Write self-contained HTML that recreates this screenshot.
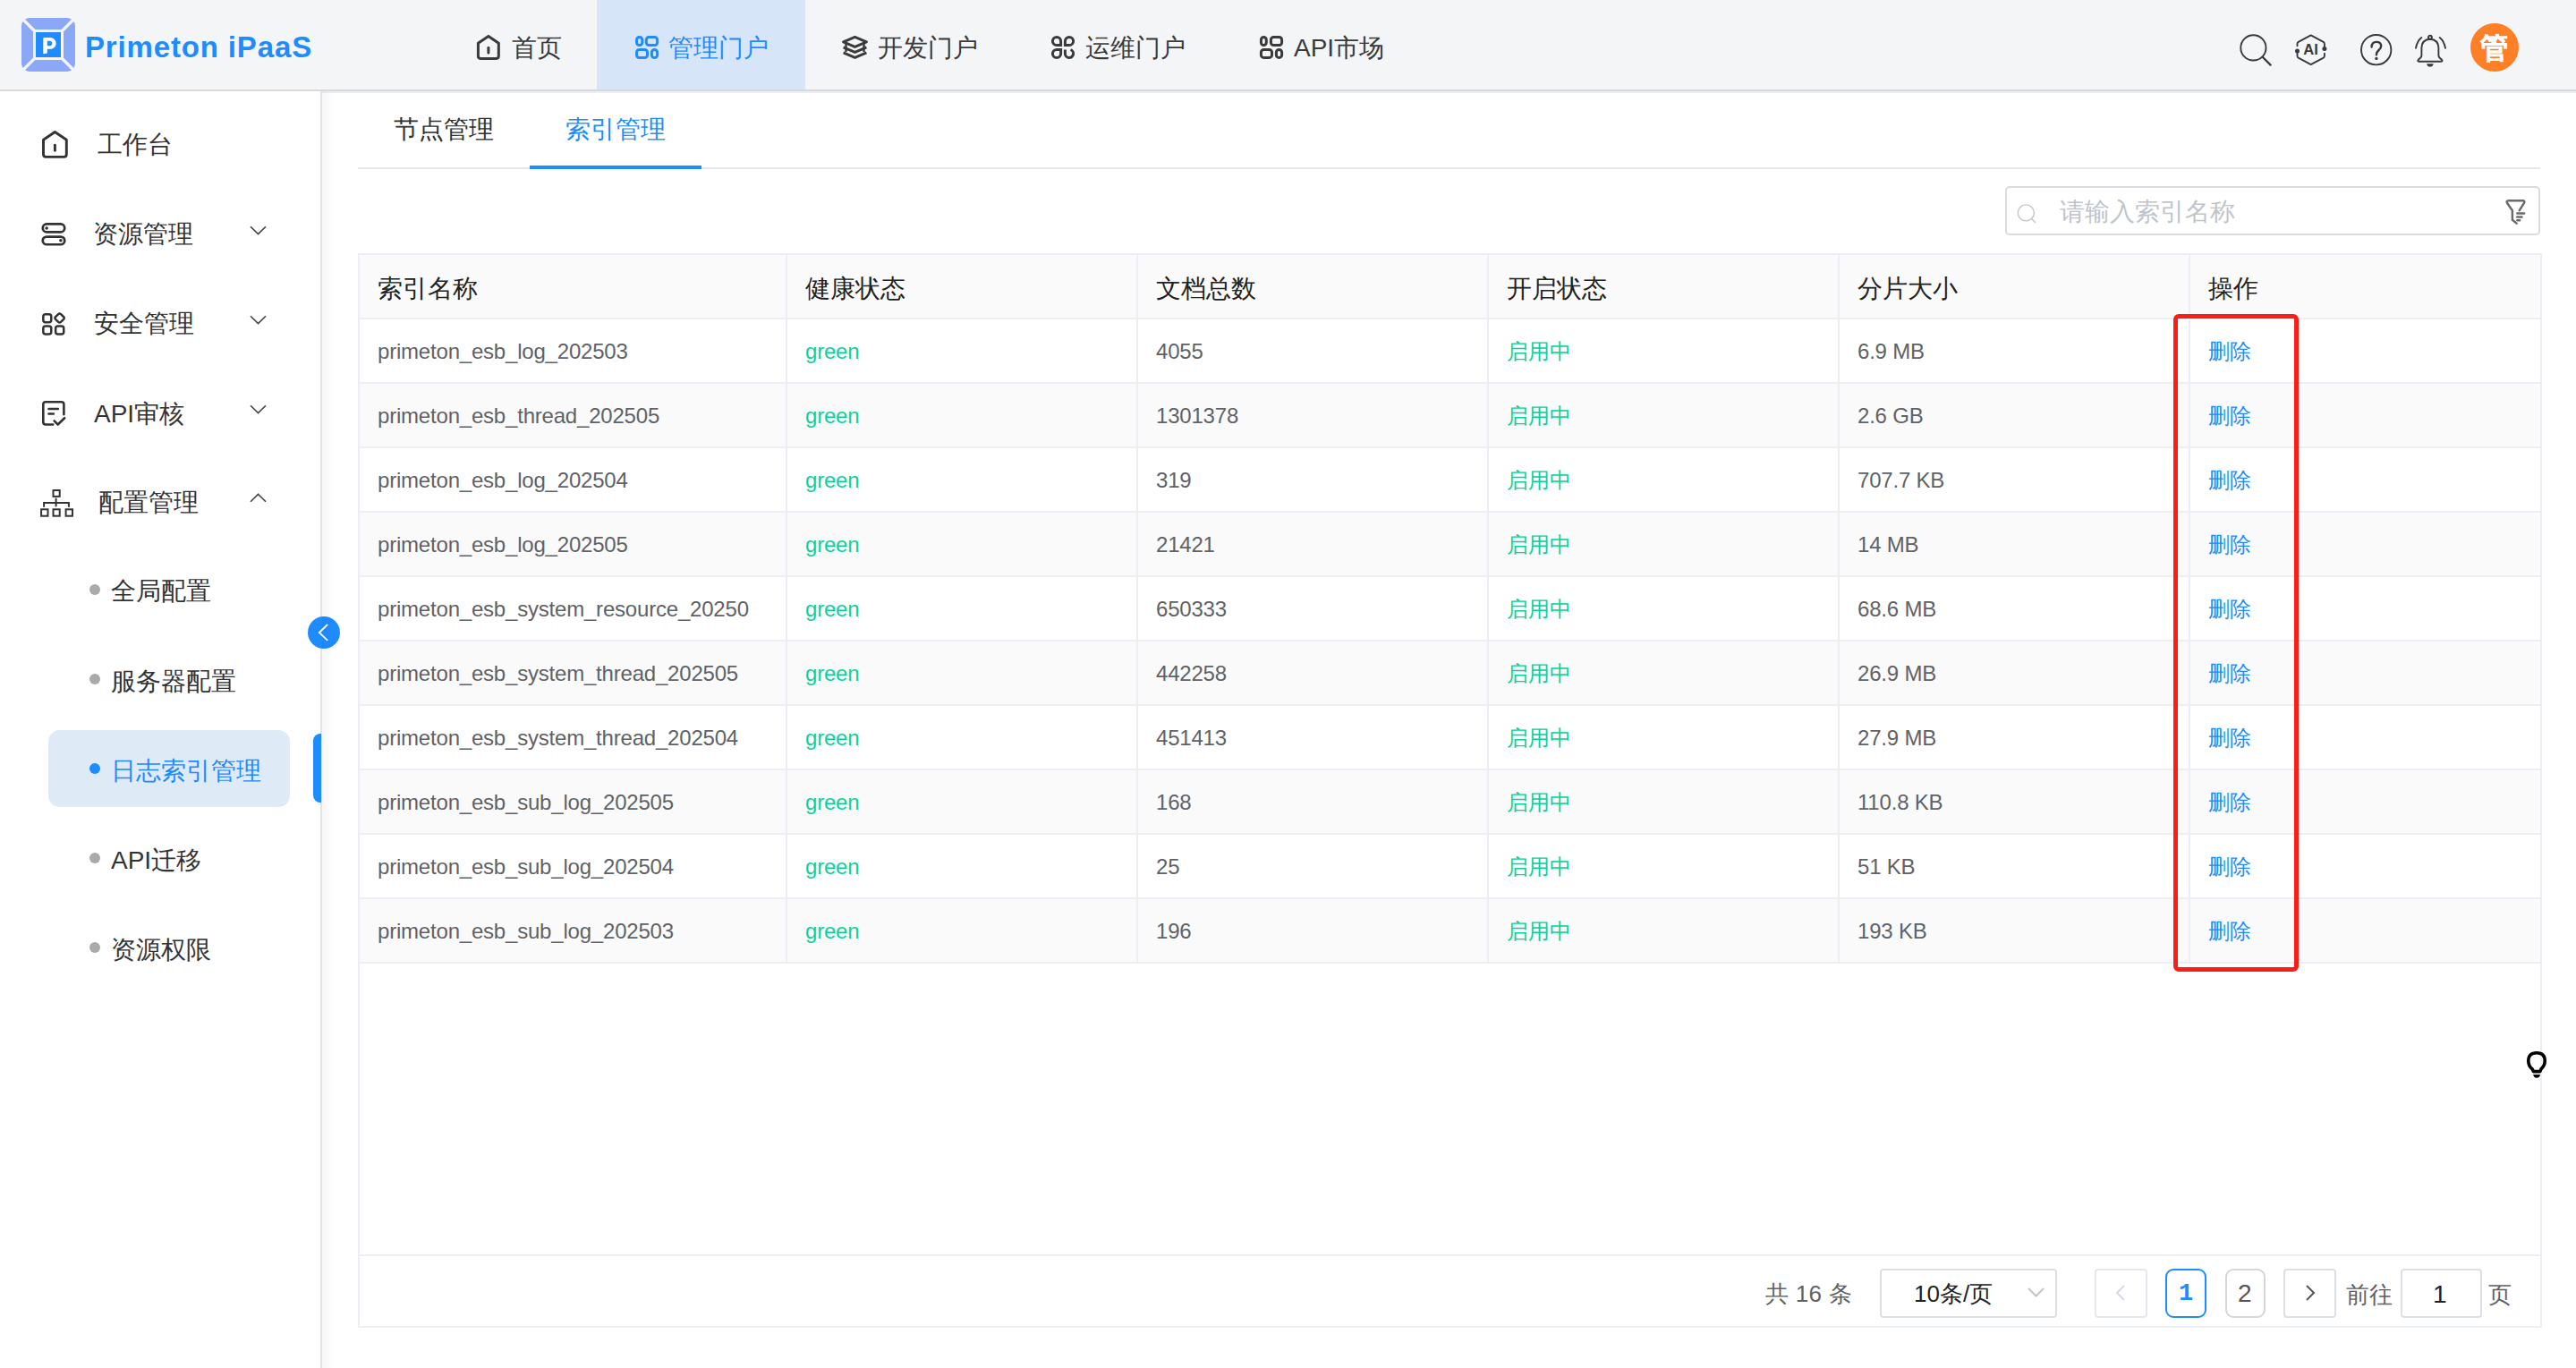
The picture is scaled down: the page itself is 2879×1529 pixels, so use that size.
<!DOCTYPE html>
<html><head><meta charset="utf-8">
<style>
*{box-sizing:border-box;margin:0;padding:0}
html,body{width:2879px;height:1529px;overflow:hidden;background:#fff;font-family:"Liberation Sans",sans-serif;color:#333;line-height:1}
.a{position:absolute;white-space:nowrap}
svg.a{display:block;overflow:visible}
#hdr{position:absolute;left:0;top:0;width:2879px;height:102px;background:#f4f5f7;border-bottom:2px solid #d9d9d9}
.logo-t{left:95px;top:36px;font-size:33px;font-weight:bold;color:#1e8cff;letter-spacing:0.85px}
.nt{top:40px;font-size:28px;color:#3a3a3a}
#side{position:absolute;left:0;top:102px;width:360px;height:1427px;background:#fff;border-right:2px solid #e4e4e4}
.st{font-size:28px;color:#333}
.dot{position:absolute;width:12px;height:12px;border-radius:50%;background:#aaa}
.tab{top:131px;font-size:28px;color:#303133}
#tbl{position:absolute;left:400px;top:283px;width:2439px;border-collapse:collapse;table-layout:fixed}
#tbl td,#tbl th{height:72px;border:2px solid #ebeef5;padding:0 0 0 20px;text-align:left;white-space:nowrap;overflow:hidden;font-weight:normal;vertical-align:middle}
#tbl th{font-size:28px;color:#222;background:#fafafa;padding-top:5px}
#tbl td{font-size:24px;color:#606266;letter-spacing:-0.2px;padding-top:2px}
#tbl tr.s td{background:#fafafa}
#tbl td.g{color:#08d39a}
#tbl td.lnk{color:#1e8cff}
.pg{position:absolute;top:1418px;height:55px;border:2px solid #dcdfe6;border-radius:4px;background:#fff}

</style></head><body>
<div id="hdr">
  <svg class="a" style="left:24px;top:20px" width="60" height="60" viewBox="0 0 60 60">
    <rect x="0" y="0" width="60" height="60" rx="9" fill="#8ba7f7"/>
    <g stroke="#f3f4f6" stroke-width="3.2">
      <line x1="-2" y1="-2" x2="15" y2="15"/><line x1="62" y1="-2" x2="45" y2="15"/>
      <line x1="-2" y1="62" x2="15" y2="45"/><line x1="62" y1="62" x2="45" y2="45"/>
    </g>
    <rect x="14.5" y="14.5" width="31" height="31" fill="#1e8cff" stroke="#f3f4f6" stroke-width="3"/>
    <path d="M24.3 23Q24.3 22.1 25.3 22.1H30.8C36 22.1 38.6 24.6 38.6 28.45C38.6 32.3 36 34.8 30.8 34.8H28.8V39.5L24.3 40.2Z M28.8 25.8V31.2H31.3Q34.3 31.2 34.3 28.5Q34.3 25.8 31.3 25.8Z" fill="#fff" fill-rule="evenodd"/>
  </svg>
  <div class="a logo-t">Primeton iPaaS</div>

  <!-- nav -->
  <svg class="a" style="left:533px;top:39px" width="26" height="28" viewBox="0 0 26 28" fill="none" stroke="#3a3a3a" stroke-width="3" stroke-linejoin="round" stroke-linecap="round">
    <path d="M1.4 9.2 L12.9 1.4 L24.3 9.2 V23.8 Q24.3 26.4 21.7 26.4 H4 Q1.4 26.4 1.4 23.8 Z"/><path d="M12.9 14.2v5.8"/>
  </svg>
  <div class="a nt" style="left:572px">首页</div>

  <div class="a" style="left:667px;top:0;width:233px;height:100px;background:#d6e6f8"></div>
  <svg class="a" style="left:710px;top:40px" width="26" height="26" viewBox="0 0 26 26" fill="none" stroke="#1e8cff" stroke-width="3">
    <rect x="1.5" y="1.5" width="6.3" height="9" rx="3"/><rect x="12.3" y="1.5" width="12.3" height="9" rx="3"/>
    <rect x="1.5" y="15.5" width="12" height="9" rx="3"/><rect x="18.4" y="15.5" width="6.2" height="9" rx="3"/>
  </svg>
  <div class="a nt" style="left:747px;color:#1e8cff">管理门户</div>

  <svg class="a" style="left:941px;top:40px" width="29" height="26" viewBox="0 0 29 26" fill="none" stroke="#3a3a3a" stroke-width="3" stroke-linejoin="round">
    <path d="M1.6 6.8 L14.5 1.4 L27.4 6.8 L14.5 12.4 Z"/><path d="M1.6 12.9 L14.5 18.4 L27.4 12.9"/><path d="M1.6 18.9 L14.5 24.4 L27.4 18.9"/><path d="M4.5 8 V18 M24.5 8 V18" stroke-width="2.4"/>
  </svg>
  <div class="a nt" style="left:981px">开发门户</div>

  <svg class="a" style="left:1175px;top:40px" width="26" height="26" viewBox="0 0 26 26" fill="none" stroke="#3a3a3a" stroke-width="3">
    <path d="M6 10.6 A4.6 4.6 0 1 1 10.6 6 V10.6 Z"/><path d="M15.4 6 A4.6 4.6 0 1 1 20 10.6 H15.4 Z"/><path d="M10.6 20 A4.6 4.6 0 1 1 6 15.4 H10.6 Z"/><path d="M15.4 15.4 V20 A4.6 4.6 0 1 0 21.5 15.6"/>
  </svg>
  <div class="a nt" style="left:1213px">运维门户</div>

  <svg class="a" style="left:1408px;top:40px" width="27" height="26" viewBox="0 0 27 26" fill="none" stroke="#3a3a3a" stroke-width="3">
    <rect x="1.4" y="1.4" width="5.9" height="9.2" rx="3"/><rect x="12.4" y="1.4" width="12.2" height="9.2" rx="3"/>
    <rect x="1.4" y="15.4" width="12.1" height="9" rx="3"/><rect x="18.4" y="15.4" width="6.2" height="9" rx="3"/>
  </svg>
  <div class="a nt" style="left:1446px">API市场</div>

  <!-- right icons -->
  <svg class="a" style="left:2503px;top:38px" width="36" height="36" viewBox="0 0 36 36" fill="none" stroke="#3a3a3a" stroke-width="1.9">
    <circle cx="15.4" cy="15.4" r="14.1"/><path d="M26 26 L34.6 34.6" stroke-width="2.3" stroke-linecap="round"/>
  </svg>
  <svg class="a" style="left:2565px;top:38px" width="36" height="36" viewBox="0 0 36 36" fill="none" stroke="#3a3a3a" stroke-width="1.9" stroke-linecap="round" stroke-linejoin="round">
    <path d="M2.5 13.2 V11 Q2.5 9.6 3.7 8.9 L17.7 1.4 L31.7 8.9 Q32.9 9.6 32.9 11 V16.3"/>
    <path d="M32.9 21.8 V24.6 Q32.9 26 31.7 26.7 L17.7 34.1 L3.7 26.7 Q2.5 26 2.5 24.6 V19"/>
    <circle cx="32.9" cy="16.5" r="2.5" fill="#3a3a3a" stroke="none"/><circle cx="2.5" cy="19" r="2.5" fill="#3a3a3a" stroke="none"/>
    <text x="17.6" y="23.2" font-size="16.5" font-weight="bold" font-family="Liberation Sans" fill="#3a3a3a" stroke="none" text-anchor="middle">AI</text>
  </svg>
  <svg class="a" style="left:2638px;top:38px" width="36" height="36" viewBox="0 0 36 36" fill="none" stroke="#3a3a3a" stroke-width="1.9" stroke-linecap="round">
    <circle cx="17.7" cy="17.7" r="16.7"/><path d="M12.6 14.6 Q12.6 8.9 17.9 8.9 Q23.2 8.9 23.2 13.5 Q23.2 15.8 20.6 18 Q17.9 20.2 17.9 23.3" stroke-width="2.4"/>
    <circle cx="17.9" cy="27.4" r="1.7" fill="#3a3a3a" stroke="none"/>
  </svg>
  <svg class="a" style="left:2699px;top:39px" width="35" height="37" viewBox="0 0 35 37" fill="none" stroke="#3a3a3a" stroke-width="1.9" stroke-linecap="round" stroke-linejoin="round">
    <path d="M1 14.7 Q2.5 7 7.3 3.1 M34 14.7 Q32.5 7 27.7 3.1"/>
    <circle cx="16.9" cy="2.8" r="2"/>
    <path d="M16.9 4.8 Q7.8 5.2 7.4 14.5 V23 Q7.4 24.6 6 25.8 L3.8 27.8 Q2.3 29.7 4.6 29.7 H29.2 Q31.5 29.7 30 27.8 L27.8 25.8 Q26.4 24.6 26.4 23 V14.5 Q26 5.2 16.9 4.8 Z"/>
    <path d="M13.2 32.2 H20.6 Q20.3 35.6 16.9 35.6 Q13.5 35.6 13.2 32.2 Z" fill="#3a3a3a" stroke="none"/>
  </svg>
  <div class="a" style="left:2761px;top:26px;width:54px;height:54px;border-radius:50%;background:#ff7f27"></div>
  <div class="a" style="left:2772px;top:37px;font-size:31px;font-weight:bold;color:#fff;-webkit-text-stroke:0.5px #fff;transform:scaleY(1.06);transform-origin:top left">管</div>
</div>

<div id="side">
</div>
<!-- sidebar content (page coords) -->
<svg class="a" style="left:47px;top:146px" width="30" height="31" viewBox="0 0 30 31" fill="none" stroke="#333" stroke-width="2.9" stroke-linejoin="round" stroke-linecap="round">
  <path d="M1.5 10.2 L14.4 1.5 L27.3 10.2 V26.6 Q27.3 29.4 24.5 29.4 H4.3 Q1.5 29.4 1.5 26.6 Z"/><path d="M14.4 16.3v6"/>
</svg>
<div class="a st" style="left:109px;top:148px">工作台</div>

<svg class="a" style="left:46px;top:249px" width="28" height="26" viewBox="0 0 28 26" fill="none" stroke="#333" stroke-width="2.7">
  <rect x="1.75" y="1.45" width="24.5" height="8.9" rx="4.45"/><rect x="1.75" y="15.55" width="24.5" height="8.7" rx="4.35"/>
  <circle cx="6.1" cy="6" r="1.8" fill="#333" stroke="none"/><circle cx="21.9" cy="19.7" r="1.8" fill="#333" stroke="none"/>
</svg>
<div class="a st" style="left:104px;top:248px">资源管理</div>
<svg class="a" style="left:279px;top:252px" width="19" height="11" viewBox="0 0 19 11" fill="none" stroke="#444" stroke-width="1.6"><path d="M1 1.2 L9.5 9.6 L18 1.2"/></svg>

<svg class="a" style="left:46px;top:349px" width="28" height="27" viewBox="0 0 28 27" fill="none" stroke="#333" stroke-width="2.5" stroke-linejoin="round">
  <rect x="2.35" y="2.15" width="8.9" height="9.1" rx="2.5"/><path d="M20.6 1.5 Q21.4 1.5 22 2.1 L25.1 5.2 Q26.3 6.5 25.1 7.8 L22 10.9 Q20.6 12.2 19.2 10.9 L16.1 7.8 Q14.9 6.5 16.1 5.2 L19.2 2.1 Q19.8 1.5 20.6 1.5 Z"/>
  <rect x="2.35" y="15.45" width="8.9" height="9.1" rx="2.5"/><rect x="16.15" y="15.45" width="9.1" height="9.1" rx="2.5"/>
</svg>
<div class="a st" style="left:105px;top:348px">安全管理</div>
<svg class="a" style="left:279px;top:352px" width="19" height="11" viewBox="0 0 19 11" fill="none" stroke="#444" stroke-width="1.6"><path d="M1 1.2 L9.5 9.6 L18 1.2"/></svg>

<svg class="a" style="left:47px;top:448px" width="27" height="29" viewBox="0 0 27 29" fill="none" stroke="#333" stroke-width="2.6" stroke-linecap="round" stroke-linejoin="round">
  <path d="M12.2 26.5 H4 Q1.3 26.5 1.3 23.8 V4 Q1.3 1.3 4 1.3 H21.6 Q24.4 1.3 24.4 4 V15.2"/><path d="M7.5 9 H17.9 M7.5 14.5 H12.9"/><path d="M13.6 22.4 L17.7 26.5 L25.1 19.2"/>
</svg>
<div class="a st" style="left:105px;top:449px">API审核</div>
<svg class="a" style="left:279px;top:452px" width="19" height="11" viewBox="0 0 19 11" fill="none" stroke="#444" stroke-width="1.6"><path d="M1 1.2 L9.5 9.6 L18 1.2"/></svg>

<svg class="a" style="left:45px;top:547px" width="37" height="31" viewBox="0 0 37 31" fill="none" stroke="#333" stroke-width="2">
  <rect x="14.5" y="1" width="7.2" height="6.9"/><path d="M17.6 10.5 V18.6 M4.1 18.9 V14.9 H31.9 V18.9" stroke-linecap="round"/>
  <rect x="1.1" y="22.3" width="7.4" height="7.4"/><rect x="14.5" y="22.3" width="7.2" height="7.4"/><rect x="28.6" y="22.3" width="7.4" height="7.4"/>
</svg>
<div class="a st" style="left:110px;top:548px">配置管理</div>
<svg class="a" style="left:279px;top:551px" width="19" height="11" viewBox="0 0 19 11" fill="none" stroke="#444" stroke-width="1.6"><path d="M1 9.8 L9.5 1.4 L18 9.8"/></svg>

<div class="dot" style="left:100px;top:653px"></div><div class="a st" style="left:124px;top:647px">全局配置</div>
<div class="dot" style="left:100px;top:753px"></div><div class="a st" style="left:124px;top:748px">服务器配置</div>
<div class="a" style="left:54px;top:816px;width:270px;height:86px;border-radius:13px;background:#dfeaf7"></div>
<div class="dot" style="left:100px;top:853px;background:#1e8cff"></div><div class="a st" style="left:124px;top:848px;color:#1e8cff">日志索引管理</div>
<div class="a" style="left:350px;top:820px;width:9px;height:77px;border-radius:8px 0 0 8px;background:#1e8cff"></div>
<div class="dot" style="left:100px;top:953px"></div><div class="a st" style="left:124px;top:948px">API迁移</div>
<div class="dot" style="left:100px;top:1053px"></div><div class="a st" style="left:124px;top:1048px">资源权限</div>

<div class="a" style="left:344px;top:689px;width:36px;height:36px;border-radius:50%;background:#1e8cff"></div>
<svg class="a" style="left:344px;top:689px" width="36" height="36" viewBox="0 0 36 36" fill="none" stroke="#fff" stroke-width="1.8" stroke-linecap="round"><path d="M21.6 9.5 L12.8 18 L21.6 26.4"/></svg>

<!-- main -->
<div class="a" style="left:360px;top:102px;width:2519px;height:2px;background:#ebeef6"></div>
<div class="a" style="left:360px;top:102px;width:14px;height:1427px;background:linear-gradient(to right,rgba(0,0,0,0.035),rgba(0,0,0,0))"></div>
<div class="a" style="left:400px;top:187px;width:2439px;height:2px;background:#e4e7ed"></div>
<div class="a tab" style="left:440px">节点管理</div>
<div class="a tab" style="left:632px;color:#1e8cff">索引管理</div>
<div class="a" style="left:592px;top:185px;width:192px;height:4px;background:#1e8cff"></div>

<div class="a" style="left:2241px;top:208px;width:598px;height:55px;border:2px solid #d8dbe0;border-radius:5px"></div>
<svg class="a" style="left:2254px;top:228px" width="22" height="22" viewBox="0 0 22 22" fill="none" stroke="#c0c4cc" stroke-width="1.4" stroke-linecap="round"><circle cx="10.3" cy="9.9" r="9"/><path d="M16.8 16.7 L20.5 20.4"/></svg>
<div class="a" style="left:2302px;top:223px;font-size:28px;color:#c0c4cc">请输入索引名称</div>
<svg class="a" style="left:2799px;top:222px" width="25" height="30" viewBox="0 0 25 30" fill="none" stroke="#6b6b6b" stroke-width="2.5" stroke-linejoin="round" stroke-linecap="round">
  <path d="M16.8 13.1 L21.8 5.2 Q23.5 2.3 20.2 2.3 H4.8 Q1.2 2.3 3.5 5.5 L8.9 13.4 V23.8 L13.6 27.6"/><path d="M14.3 16.4 H22.1 M14.3 20.4 H19.5 M14.3 24.3 H17.1"/>
</svg>

<table id="tbl">
<colgroup><col style="width:478px"><col style="width:392px"><col style="width:392px"><col style="width:392px"><col style="width:392px"><col style="width:393px"></colgroup>
<tr><th>索引名称</th><th>健康状态</th><th>文档总数</th><th>开启状态</th><th>分片大小</th><th>操作</th></tr>
<tr><td>primeton_esb_log_202503</td><td class="g">green</td><td>4055</td><td class="g">启用中</td><td>6.9 MB</td><td class="lnk">删除</td></tr>
<tr class="s"><td>primeton_esb_thread_202505</td><td class="g">green</td><td>1301378</td><td class="g">启用中</td><td>2.6 GB</td><td class="lnk">删除</td></tr>
<tr><td>primeton_esb_log_202504</td><td class="g">green</td><td>319</td><td class="g">启用中</td><td>707.7 KB</td><td class="lnk">删除</td></tr>
<tr class="s"><td>primeton_esb_log_202505</td><td class="g">green</td><td>21421</td><td class="g">启用中</td><td>14 MB</td><td class="lnk">删除</td></tr>
<tr><td>primeton_esb_system_resource_20250</td><td class="g">green</td><td>650333</td><td class="g">启用中</td><td>68.6 MB</td><td class="lnk">删除</td></tr>
<tr class="s"><td>primeton_esb_system_thread_202505</td><td class="g">green</td><td>442258</td><td class="g">启用中</td><td>26.9 MB</td><td class="lnk">删除</td></tr>
<tr><td>primeton_esb_system_thread_202504</td><td class="g">green</td><td>451413</td><td class="g">启用中</td><td>27.9 MB</td><td class="lnk">删除</td></tr>
<tr class="s"><td>primeton_esb_sub_log_202505</td><td class="g">green</td><td>168</td><td class="g">启用中</td><td>110.8 KB</td><td class="lnk">删除</td></tr>
<tr><td>primeton_esb_sub_log_202504</td><td class="g">green</td><td>25</td><td class="g">启用中</td><td>51 KB</td><td class="lnk">删除</td></tr>
<tr class="s"><td>primeton_esb_sub_log_202503</td><td class="g">green</td><td>196</td><td class="g">启用中</td><td>193 KB</td><td class="lnk">删除</td></tr>
</table>
<!-- empty area borders -->
<div class="a" style="left:400px;top:1076px;width:2px;height:408px;background:#ebeef5"></div>
<div class="a" style="left:2839px;top:1076px;width:2px;height:408px;background:#ebeef5"></div>
<div class="a" style="left:400px;top:1402px;width:2441px;height:2px;background:#ebeef5"></div>
<div class="a" style="left:400px;top:1482px;width:2441px;height:2px;background:#ebeef5"></div>

<!-- red box -->
<div class="a" style="left:2429px;top:351px;width:140px;height:735px;border:5.5px solid #fa1e16;border-radius:6px"></div>

<!-- lightbulb -->
<svg class="a" style="left:2824px;top:1175px" width="22" height="30" viewBox="0 0 22 30" fill="none" stroke="#000" stroke-width="3.6" stroke-linejoin="round">
  <path d="M7.4 22.6 L6.2 20 Q1.8 16.6 1.8 10.8 Q1.8 1.8 11 1.8 Q20.2 1.8 20.2 10.8 Q20.2 16.2 16 19.8 L14.8 22.6 Z"/>
  <path d="M7.2 26 H15 Q14.6 29.7 11.1 29.7 Q7.6 29.7 7.2 26 Z" fill="#000" stroke="none"/>
</svg>

<!-- pagination -->
<div class="a" style="left:1973px;top:1433px;font-size:26px;color:#606266;letter-spacing:0.3px">共 16 条</div>
<div class="pg" style="left:2101px;width:198px;"></div>
<div class="a" style="left:2139px;top:1433px;font-size:26px;color:#222">10条/页</div>
<svg class="a" style="left:2266px;top:1439px" width="19" height="11" viewBox="0 0 19 11" fill="none" stroke="#c0c4cc" stroke-width="2"><path d="M1 1 L9.5 9.5 L18 1"/></svg>
<div class="pg" style="left:2341px;width:59px;border-color:#e4e7ed"></div>
<svg class="a" style="left:2363px;top:1435px" width="14" height="20" viewBox="0 0 14 20" fill="none" stroke="#d5d9e0" stroke-width="2"><path d="M11 2 L3 10 L11 18"/></svg>
<div class="pg" style="left:2420px;width:46px;border-color:#1e8cff;border-radius:9px"></div>
<div class="a" style="left:2435px;top:1433px;font-size:27px;font-weight:bold;color:#1e8cff;font-family:'Liberation Mono',monospace">1</div>
<div class="pg" style="left:2487px;width:45px;border-radius:9px;border-color:#d6d6d6"></div>
<div class="a" style="left:2501px;top:1432px;font-size:28px;color:#555">2</div>
<div class="pg" style="left:2552px;width:59px;"></div>
<svg class="a" style="left:2575px;top:1435px" width="14" height="20" viewBox="0 0 14 20" fill="none" stroke="#555" stroke-width="2"><path d="M3 2 L11 10 L3 18"/></svg>
<div class="a" style="left:2622px;top:1434px;font-size:26px;color:#606266">前往</div>
<div class="pg" style="left:2683px;width:91px;"></div>
<div class="a" style="left:2719px;top:1433px;font-size:28px;color:#222">1</div>
<div class="a" style="left:2781px;top:1434px;font-size:26px;color:#606266">页</div>

</body></html>
